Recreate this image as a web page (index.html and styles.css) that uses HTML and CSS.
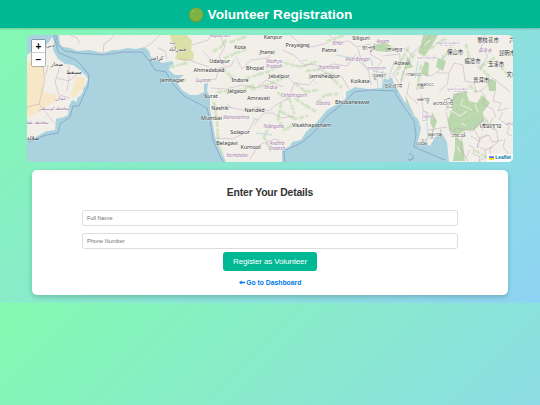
FILE: index.html
```html
<!DOCTYPE html>
<html lang="en">
<head>
  <meta charset="UTF-8">
  <meta name="viewport" content="width=device-width, initial-scale=1.0">
  <title>Volunteer Registration</title>
  <link rel="stylesheet" href="styles.css">
</head>
<body>
  <header>
    <svg class="dot" viewBox="0 0 16 16"><circle cx="8" cy="8" r="7.4" fill="#689f38"/><circle cx="8.2" cy="7.6" r="6.7" fill="#7cb342"/><ellipse cx="5" cy="4.4" rx="1.4" ry=".8" fill="#95c45f" transform="rotate(-40 5 4.4)"/></svg>
    <h1>Volunteer Registration</h1>
  </header>

  <div class="map">
    <svg class="tiles" viewBox="27 35 486 126.5" preserveAspectRatio="none">
      <defs>
        <path id="coast" d="M27 55L34 50L43 48L49 42L52 37L54 41L53 50L58 59L65 64L73 65L80 70L85 75L88 79L86 85L83 88L83 92L80 96L77 98L77 102L72 100L69 106L68 115L64 117L56 119L55 130L47 131L43 133L36 137L27 139Z
          M59 35L60 44L63 47L70 48L77 51L90 50L103 53L112 50L118 50L128 48L136 49L145 47L149 51L151 57L157 60L162 63L172 61L174 64L170 66L169 70L175 75L184 75L178 80L174 78L182 90L190 95L198 95L204 92L204 84L208 83L207 91L210 97L210 110L212 119L215 137L220 150L226 162H282L282 150L290 146L292 142L301 140L306 132L317 122L327 110L339 103L346 98L346 92L355 87L368 89L382 88L384 78L388 80L392 77L394 84L399 92L404 101L411 108L413 115L418 119L421 128L418 142L424 142L430 146L435 137L442 133L447 142L449 162H514V34H59Z"/>
        <clipPath id="land"><use href="#coast"/></clipPath>
      </defs>
      <rect x="27" y="35" width="486" height="127" fill="#aad3df"/>
      <use href="#coast" fill="#f2efe9"/>

      <!-- deserts and forests -->
      <g clip-path="url(#land)">
        <path d="M27 62L43 64L45 75L43 92L57 95L56 100L40 112L27 118ZM77 77L85 77L84 87L74 98L70 95L74 86Z" fill="#f6e8c6"/>
        <path d="M170 35H187L192 41L191 50L194 54L193 60L185 61L175 59L178 50L173 46Z" fill="#dbdfa8"/>
        <g class="wood-light">
          <path d="M171 67L179 65L186 63M182 81L187 79M214 51L221 47L226 40M225 58L236 53L245 50M223 69L233 78M218 92L240 90L254 85M214 103L217 119L218 138L223 158M247 78L267 72L281 65M252 89L270 84L285 77M278 93L290 100L294 113M281 104L278 120L285 130L294 124M296 84L306 92L318 90M296 99L305 105L315 111M307 71L321 69L333 79L341 87M318 102L325 95L337 94M285 63L301 67L315 62M270 125L264 137L271 151M328 41L345 35M231 42L245 37M282 112L295 119L307 116"/>
        </g>
        <path class="wood" d="M372 45L386 42L393 48L389 52L376 51ZM423 35L438 35L431 47L424 57L418 52L421 44ZM438 58L446 61L443 71L436 67ZM407 56L413 67L405 69ZM425 61L421 73L428 77L429 63ZM453 94L466 91L469 101L477 103L482 95L490 103L483 112L484 121L474 130L465 130L457 136L449 130L448 119L452 110ZM455 135L463 143L465 161H453L455 149ZM487 78L496 81L496 91L489 91ZM432 112L437 121L434 130L430 123ZM405 94L410 106L415 116L407 108Z"/>
        <g class="wood-light">
          <path d="M408 48L402 60L397 74M414 55L404 70L401 82M431 48L446 38M451 48L440 62M466 45L469 57M479 67L489 76M470 86L476 92M485 119L494 129M482 66L494 58M476 151L487 158M501 67L510 77M455 105L470 107M421 66L417 91M451 112L462 120L481 111"/>
        </g>
        <path class="clearing" d="M452 111l8 5l7-5M463 98l-2 7l11 5M461 123l5 3M475 104l3 8M424 45l6-5M457 146l3 6M290 105l6 5M279 97l7 4M313 80l5 4"/>
      </g>
      <g class="water">
        <path d="M203 51L211 60L218 63M227 104l5 4M230 78l8 3M253 118l5 2M301 61l7-1M376 67L378 88M371 58L374 73M383 66L382 87M394 61L388 82M418 61L415 78M426 111L428 139M256 133l16 2M336 55L354 58L370 70M431 133L424 145M443 55l-1 10M487 120l1 5"/>
      </g>

      <!-- admin borders -->
      <g class="border">
        <path d="M27 107L39 104L45 79L42 63L36 57M39 104L55 124M48 65L46 75M60 66L55 82L59 95M69 66L69 78L67 91M57 78L69 81L80 72M59 95L70 98M70 35L77 38L80 44M103 53L104 44L112 38L114 35M146 47L153 42L160 35M178 59L189 60L197 63L209 67M158 48L165 51L167 59M192 45L208 40L211 35M220 35L225 47L219 57L224 65M236 57L242 69L251 60L268 58L273 51M205 81L216 79L219 68L231 66L234 60M211 88L226 89L242 85L256 88L266 80L274 83L283 87M212 109L229 107L247 111L256 107L269 111L276 105M254 125L264 113L273 113L281 118L294 116M216 138L233 139L249 130L255 119M250 159L259 145L275 139L285 143M276 105L289 98L294 83L285 74M294 83L309 85L317 75L330 73L342 77L349 89M301 66L311 64L322 67L334 64L347 66L356 54M282 50L294 55L303 64M290 35L301 44L312 47L327 43M329 35L337 42L349 41L357 47L371 44M375 43L370 54L382 61L374 71L388 74M358 48L361 60L369 72L371 85M383 56L400 54L400 65L393 74L400 85M391 48L406 49L413 57M430 35L425 43L411 54L404 71L400 85M440 70L431 76L422 74M437 73L449 73L454 63L463 65L465 81L474 83L476 92L484 89L493 78L510 92M449 74L447 85L439 91M446 111L451 101L461 92L468 92M446 112L451 134L462 137L461 149L468 161M451 134L456 128L472 131L485 117M485 35L481 48L488 56L480 69M409 83L407 94L418 104M421 95L423 110L430 116M480 137L477 148M428 130L447 127"/>
        <path d="M474 130l5 8l10-3l3 7l11-2M484 120l-2 11M493 117l-4 9l8 5l1 11l-8 6l1 13M503 112l-4 7l10 7l-2 8l5 2M469 145l5 3l-1 6l7 3l-1 5M480 141l-3 5l8 4l8-3M505 139l-2 8l5 6l-6 8M480 91l5 5l-2 8l10 5l3 9M495 92l-2 9l8 2l-3 8l10-3M466 158l4-8M485 150l1 7l-7 4M471 136l8 5l8-7"/>
      </g>
      <g class="seaborder">
        <path d="M54 35L56 44L58 52L66 56L76 60L82 66L89 75L88 86L83 97L79 106L73 106L70 117L60 124L58 133L46 135L28 142M56 35L58 45L65 51L78 53L103 55L123 52L142 52L150 62L155 70L166 72L172 83L184 96L207 108L210 120L213 140L219 154L223 162M285 162L284 151L301 143L314 132L327 116L344 103L354 92L369 90L394 91L402 104L414 121L416 135L414 147L445 160M397 92L394 85M409 154a3 3 0 1 1-1 5M409 161L414 158"/>
      </g>

      <!-- place names -->
      <g class="city">
        <text x="240" y="49">Kota</text>
        <text x="273" y="39">Kanpur</text>
        <text x="297.5" y="46.5">Prayagraj</text>
        <text x="329" y="51.5">Patna</text>
        <text x="361" y="40">Siliguri</text>
        <text x="267" y="54">Jhansi</text>
        <text x="219.5" y="62.5">Udaipur</text>
        <text x="255" y="69.5">Bhopal</text>
        <text x="209" y="72">Ahmedabad</text>
        <text x="172" y="81.5">Jamnagar</text>
        <text x="240" y="82">Indore</text>
        <text x="279" y="78">Jabalpur</text>
        <text x="324.5" y="78">Jamshedpur</text>
        <text x="360" y="83">Kolkata</text>
        <text x="237" y="93">Jalgaon</text>
        <text x="211" y="97.5">Surat</text>
        <text x="258.5" y="100">Amravati</text>
        <text x="220" y="109.5">Nashik</text>
        <text x="254.5" y="111.5">Nanded</text>
        <text x="211.5" y="119.5">Mumbai</text>
        <text x="352.5" y="104">Bhubaneswar</text>
        <text x="311.5" y="126.5">Visakhapatnam</text>
        <text x="240" y="133.5">Solapur</text>
        <text x="227" y="145">Belagavi</text>
        <text x="250.5" y="148.5">Kurnool</text>
        <text x="177.5" y="51">حيدرآباد</text>
        <text x="156" y="60">كراچی</text>
        <text x="74" y="74">مسقط</text>
        <text x="57" y="65.5">صحار</text>
        <text x="50" y="47">دبي</text>
        <text x="33" y="140">صلالة</text>
        <text x="402" y="65">Aizawl</text>
        <text x="490" y="128">เชียงราย</text>
        <text x="488" y="42">攀枝花市</text>
        <text x="455" y="54">保山市</text>
        <text x="507" y="55">昆明市</text>
        <text x="472.5" y="63">临沧市</text>
        <text x="496" y="66">玉溪市</text>
        <text x="481" y="82">普洱市</text>
        <text x="512" y="76">文山</text>
        <text x="512" y="42">六</text>
      </g>
      <g class="city script">
        <text x="368" y="49.5">রংপুর</text>
        <text x="394" y="51.5">শিলচর</text>
        <text x="379" y="77.5">খুলনা</text>
        <text x="393" y="87.5">চট্টগ্রাম</text>
        <text x="414" y="75.5">ကလေး</text>
        <text x="425" y="86">မန္တလေး</text>
        <text x="423" y="101">မကွေး</text>
        <text x="443" y="104.5">တောင်ကြီး</text>
        <text x="435" y="135.5">ရန်ကုန်</text>
        <text x="421" y="145">ပုသိမ်</text>
        <text x="458" y="137">ဘားအံ</text>
      </g>
      <g class="state">
        <text x="220" y="37">Rajasthan</text>
        <text x="338" y="44.5">Bihar</text>
        <text x="383" y="43">Assam</text>
        <text x="274" y="62.5">Madhya</text>
        <text x="274" y="67.5">Pradesh</text>
        <text x="357.5" y="60.5">West Bengal</text>
        <text x="329" y="69">Jharkhand</text>
        <text x="203" y="82">Gujarat</text>
        <text x="271" y="88.5" class="country">India</text>
        <text x="294" y="96.5">Chhattisgarh</text>
        <text x="323" y="104.5">Odisha</text>
        <text x="236" y="118.5">Maharashtra</text>
        <text x="273.5" y="128">Telangana</text>
        <text x="277" y="145">Andhra</text>
        <text x="277" y="150">Pradesh</text>
        <text x="237" y="156.5">Karnataka</text>
        <text x="172" y="44">سنڌ</text>
        <text x="61" y="100" class="country">عمان</text>
        <text x="53.5" y="110">محافظة الوسطى</text>
        <text x="36" y="124">محافظة ظفار</text>
        <text x="376" y="70" class="country">বাংলাদেশ</text>
        <text x="428" y="117.5" class="country">မြန်မာ</text>
        <text x="427" y="59">စစ်ကိုင်းတိုင်း</text>
        <text x="447" y="44">ကချင်ပြည်နယ်</text>
        <text x="457" y="90">ရှမ်းပြည်နယ်</text>
        <text x="485" y="52">云南省</text>
        <text x="510" y="124.5">ລາວ</text>
      </g>
    </svg>
    <div class="zoom">
      <button>+</button>
      <button>−</button>
    </div>
    <div class="attribution">
      <svg class="flag" viewBox="0 0 12 8"><path fill="#4c7be1" d="M0 0h12v4H0z"/><path fill="#ffd500" d="M0 4h12v4H0z"/></svg>
      <a href="#">Leaflet</a>
    </div>
  </div>

  <div class="container">
    <h2>Enter Your Details</h2>
    <input type="text" placeholder="Full Name">
    <input type="text" placeholder="Phone Number">
    <button class="register">Register as Volunteer</button>
    <a class="back" href="#"><svg class="arrow" viewBox="0 0 12 10"><path d="M0 5L5 1V3.5H12V6.5H5V9Z" fill="currentColor"/></svg>Go to Dashboard</a>
  </div>
</body>
</html>
```

FILE: styles.css
```css
* {
  box-sizing: border-box;
}

html {
  background: linear-gradient(135deg, #84fab0, #8fd3f4);
  background-size: 100% 303px;
}

body {
  margin: 0;
  height: 303px;
  font-family: "Liberation Sans", Arial, sans-serif;
  text-align: center;
  color: #333;
}

header {
  display: flex;
  align-items: center;
  justify-content: center;
  gap: 4px;
  height: 28px;
  background: #00b894;
  color: white;
  box-shadow: 0 1px 2px rgba(0, 0, 0, 0.2);
}

h1 {
  margin: 0;
  font-size: 13.6px;
  line-height: 29px;
}

.dot {
  width: 16px;
  height: 16px;
  margin-top: 1px;
}

.map {
  position: relative;
  width: 90%;
  height: 126.5px;
  margin: 7px auto 0;
  border-radius: 5px;
  overflow: hidden;
}

.tiles {
  display: block;
  width: 100%;
  height: 100%;
}

.wood {
  fill: #add19e;
  opacity: 0.8;
}

.wood-light path {
  fill: none;
  stroke: #c0dcb0;
  stroke-width: 3;
  stroke-linecap: round;
  stroke-dasharray: 3 4 1 3 5 4;
  opacity: 0.6;
}

.clearing {
  fill: none;
  stroke: #e3ead6;
  stroke-width: 1.2;
}

.water path {
  fill: none;
  stroke: #aad3df;
  stroke-width: 0.7;
}

.border path {
  fill: none;
  stroke: #b79bb6;
  stroke-width: 0.6;
  opacity: 0.7;
}

.seaborder path {
  fill: none;
  stroke: #869fc0;
  stroke-width: 0.8;
}

.city,
.state {
  font-family: "Noto Sans", "DejaVu Sans", "Noto Sans CJK SC", sans-serif;
  font-size: 5.4px;
  text-anchor: middle;
  fill: #333;
  stroke: rgba(255, 255, 255, 0.6);
  stroke-width: 0.8px;
  paint-order: stroke;
}

.script {
  font-size: 6px;
}

.state {
  font-size: 4.5px;
  font-style: italic;
  fill: #a47aa8;
}

.country {
  font-size: 5.4px;
  font-style: normal;
}

.zoom {
  position: absolute;
  top: 4px;
  left: 4px;
  display: flex;
  flex-direction: column;
  border: 1px solid rgba(0, 0, 0, 0.25);
  border-radius: 2px;
}

.zoom button {
  width: 13px;
  height: 13px;
  padding: 0;
  border: 0;
  background: white;
  color: black;
  font: bold 10px/13px "Liberation Sans", Arial, sans-serif;
}

.zoom button:first-child {
  border-bottom: 1px solid #ccc;
}

.attribution {
  position: absolute;
  right: 0;
  bottom: 0;
  display: flex;
  align-items: center;
  gap: 1.5px;
  height: 8px;
  padding: 0 2px;
  background: rgba(255, 255, 255, 0.8);
  font-size: 4.9px;
}

.attribution a {
  color: #0078a8;
  font-weight: bold;
  text-decoration: none;
}

.flag {
  width: 5px;
  height: 4px;
}

.container {
  display: flex;
  flex-direction: column;
  align-items: center;
  width: 476px;
  height: 125px;
  margin: 8.5px auto 0;
  padding-top: 16px;
  background: white;
  border-radius: 5px;
  box-shadow: 0 2px 5px rgba(0, 0, 0, 0.2);
}

h2 {
  margin: 0 0 10px;
  font-size: 10.4px;
  line-height: 14px;
  letter-spacing: -0.15px;
}

input {
  width: 376px;
  height: 16px;
  margin-bottom: 7px;
  padding: 0 4px;
  border: 1px solid #ddd;
  border-radius: 2.5px;
  font: 5.6px "Liberation Sans", Arial, sans-serif;
}

input::placeholder {
  color: #757575;
}

.register {
  width: 94px;
  height: 19px;
  margin-top: -4px;
  padding: 0;
  border: 0;
  border-radius: 3px;
  background: #00b894;
  color: white;
  font: 8px "Liberation Sans", Arial, sans-serif;
  letter-spacing: -0.12px;
}

.back {
  display: flex;
  align-items: center;
  gap: 1.5px;
  margin-top: 7.5px;
  color: #0078e7;
  font-size: 6.8px;
  line-height: 8px;
  font-weight: bold;
  text-decoration: none;
}

.arrow {
  width: 6px;
  height: 5px;
}
```
